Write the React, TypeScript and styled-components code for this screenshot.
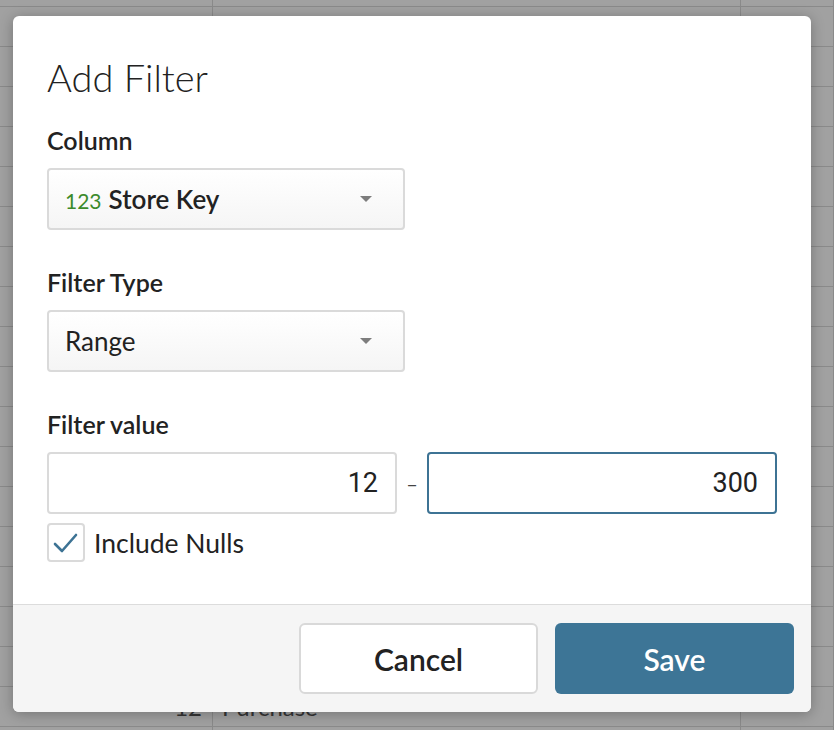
import React from "react";
import styled, { createGlobalStyle } from "styled-components";

const GlobalStyle = createGlobalStyle`
  html, body { margin: 0; padding: 0; }
  body {
    width: 834px;
    height: 730px;
    overflow: hidden;
    background: #fff;
    font-family: Lato, "Noto Sans", sans-serif;
  }
  * { box-sizing: border-box; }
`;

const Page = styled.div`
  position: relative;
  width: 834px;
  height: 730px;
  overflow: hidden;
`;

/* spreadsheet behind the modal */
const Sheet = styled.div`
  display: flex;
  flex-direction: column;
  margin-top: -33px;
`;

const SheetRow = styled.div`
  display: grid;
  grid-template-columns: 213px 528px 1fr;
  height: 40px;
  border-bottom: 1px solid #dbdbdb;
`;

const SheetCell = styled.div<{ $align?: "left" | "right" }>`
  display: flex;
  align-items: center;
  justify-content: ${(p) => (p.$align === "right" ? "flex-end" : "flex-start")};
  padding: 0 10px 0 9px;
  border-right: 1px solid #dbdbdb;
  font-size: 24px;
  color: #555;
`;

const Backdrop = styled.div`
  position: absolute;
  inset: 0;
  background: rgba(0, 0, 0, 0.37);
`;

const Dialog = styled.div`
  position: absolute;
  left: 13px;
  top: 16px;
  width: 798px;
  display: flex;
  flex-direction: column;
  background: #fff;
  border-radius: 6px;
  overflow: hidden;
  box-shadow: 0 2px 14px rgba(0, 0, 0, 0.28);
`;

const Body = styled.div`
  display: flex;
  flex-direction: column;
  padding: 38px 34px 42px;
`;

const Title = styled.h2`
  margin: 0 0 24px;
  font-size: 38px;
  line-height: 47px;
  font-weight: 300;
  color: #222;
`;

const Field = styled.div`
  display: flex;
  flex-direction: column;
  & + & {
    margin-top: 37px;
  }
`;

const Label = styled.div`
  margin-bottom: 13px;
  font-size: 25px;
  line-height: 30px;
  font-weight: 600;
  color: #222;
`;

const Select = styled.div`
  width: 358px;
  height: 62px;
  display: flex;
  align-items: center;
  justify-content: space-between;
  padding: 0 31px 0 16px;
  border: 2px solid #dadada;
  border-radius: 4px;
  background: linear-gradient(#ffffff, #f5f5f5);
`;

const SelectValue = styled.div`
  display: flex;
  align-items: baseline;
  gap: 7px;
  color: #222;
`;

const TypeBadge = styled.span`
  font-size: 21px;
  color: #3b8a2b;
`;

const ValueText = styled.span<{ $strong?: boolean }>`
  font-size: 26px;
  font-weight: ${(p) => (p.$strong ? 600 : 400)};
`;

const Caret = styled.span`
  width: 0;
  height: 0;
  border-left: 6px solid transparent;
  border-right: 6px solid transparent;
  border-top: 6px solid #7d7d7d;
`;

const RangeRow = styled.div`
  display: flex;
  align-items: center;
`;

const NumberInput = styled.input<{ $focused?: boolean }>`
  width: 350px;
  height: 62px;
  padding: 0 17px;
  border: 2px solid ${(p) => (p.$focused ? "#3d7394" : "#dadada")};
  border-radius: 4px;
  outline: none;
  background: #fff;
  text-align: right;
  font-family: Roboto, "Noto Sans", sans-serif;
  font-size: 27px;
  color: #222;
`;

const Dash = styled.span`
  width: 30px;
  text-align: center;
  font-size: 20px;
  color: #444;
`;

const CheckRow = styled.label`
  margin-top: 9px;
  display: flex;
  align-items: center;
  gap: 9px;
`;

const CheckBox = styled.span`
  width: 38px;
  height: 39px;
  display: flex;
  align-items: center;
  justify-content: center;
  border: 2px solid #dadada;
  border-radius: 4px;
  background: #fff;
`;

const CheckText = styled.span`
  font-size: 26.5px;
  color: #222;
`;

const Footer = styled.div`
  display: flex;
  justify-content: flex-end;
  gap: 17px;
  padding: 18px 17px;
  border-top: 1px solid #dcdcdc;
  background: #f5f5f5;
`;

const Button = styled.button<{ $primary?: boolean }>`
  width: 239px;
  height: 71px;
  border-radius: 6px;
  border: ${(p) => (p.$primary ? "none" : "2px solid #d9d9d9")};
  background: ${(p) => (p.$primary ? "#3d7596" : "#fff")};
  color: ${(p) => (p.$primary ? "#fff" : "#222")};
  font-family: Lato, "Noto Sans", sans-serif;
  font-size: 30px;
  font-weight: 600;
  cursor: pointer;
`;

const ROWS = 20;

export default function App() {
  return (
    <Page>
      <GlobalStyle />
      <Sheet>
        {Array.from({ length: ROWS }, (_, i) => (
          <SheetRow key={i}>
            <SheetCell $align="right">{i === 18 ? "12" : ""}</SheetCell>
            <SheetCell>{i === 18 ? "Purchase" : ""}</SheetCell>
            <SheetCell />
          </SheetRow>
        ))}
      </Sheet>
      <Backdrop />
      <Dialog>
        <Body>
          <Title>Add Filter</Title>
          <Field>
            <Label>Column</Label>
            <Select>
              <SelectValue>
                <TypeBadge>123</TypeBadge>
                <ValueText $strong>Store Key</ValueText>
              </SelectValue>
              <Caret />
            </Select>
          </Field>
          <Field>
            <Label>Filter Type</Label>
            <Select>
              <SelectValue>
                <ValueText>Range</ValueText>
              </SelectValue>
              <Caret />
            </Select>
          </Field>
          <Field>
            <Label>Filter value</Label>
            <RangeRow>
              <NumberInput defaultValue="12" readOnly />
              <Dash>–</Dash>
              <NumberInput $focused defaultValue="300" readOnly />
            </RangeRow>
            <CheckRow>
              <CheckBox>
                <svg width="26" height="22" viewBox="0 0 26 22">
                  <polyline
                    points="2,12 9,19 23,3"
                    fill="none"
                    stroke="#3d7394"
                    strokeWidth="2.6"
                    strokeLinecap="round"
                    strokeLinejoin="round"
                  />
                </svg>
              </CheckBox>
              <CheckText>Include Nulls</CheckText>
            </CheckRow>
          </Field>
        </Body>
        <Footer>
          <Button>Cancel</Button>
          <Button $primary>Save</Button>
        </Footer>
      </Dialog>
    </Page>
  );
}
